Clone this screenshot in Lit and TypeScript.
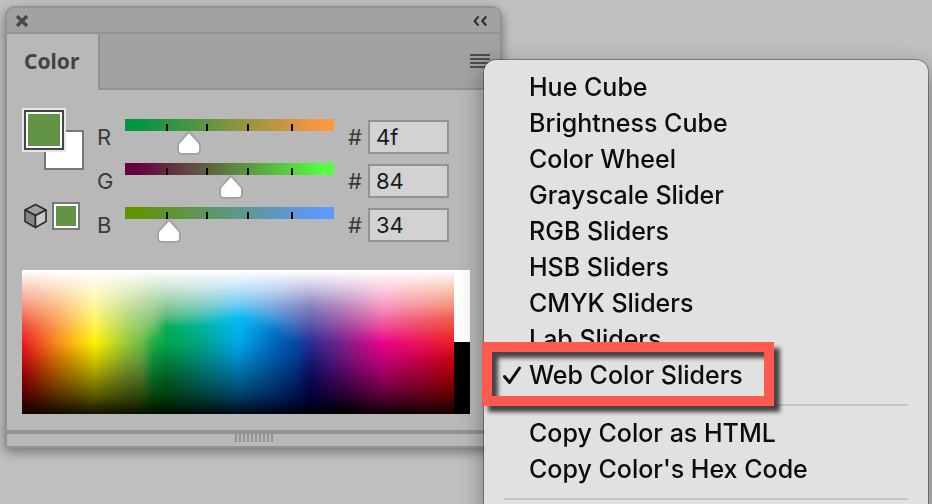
import { LitElement, html, css } from "lit";
import { customElement, property, query } from "lit/decorators.js";
import { styleMap } from "lit/directives/style-map.js";

interface Channel {
  name: string;
  hex: string;
  position: number;
  from: string;
  to: string;
}

const CHANNELS: Channel[] = [
  { name: "R", hex: "4f", position: 78, from: "#009444", to: "#ff9640" },
  { name: "G", hex: "84", position: 129, from: "#640040", to: "#55ff40" },
  { name: "B", hex: "34", position: 54, from: "#5f9400", to: "#5f98ff" },
];

const MODES = [
  "Hue Cube",
  "Brightness Cube",
  "Color Wheel",
  "Grayscale Slider",
  "RGB Sliders",
  "HSB Sliders",
  "CMYK Sliders",
  "Lab Sliders",
  "Web Color Sliders",
];
const COPY_ACTIONS = ["Copy Color as HTML", "Copy Color's Hex Code"];

/* Spectrum ramp: colour samples on a grid, blended bilinearly between them. */
const RAMP_X = [0, 36, 72, 108, 120, 131, 144, 180, 216, 252, 272, 288, 324, 360, 396, 432];
const RAMP_ROWS: [number, string][] = [
  [0, "ffffff ffffff ffffff ffffff ffffff ffffff ffffff ffffff ffffff ffffff ffffff ffffff ffffff ffffff ffffff ffffff"],
  [18, "fac8b9 fde0c4 fffbcf e4f0cc dbebcc d3e7cd cbe5d3 cbe6e4 bfe4fa c3d6f0 c4cbe8 c5c3e2 dfc8e2 fccfe0 fbcdc8 fac8b4"],
  [36, "f4907c fdbf85 fff899 c4df98 b4d799 a6d29b 8bc99d 7fcdc0 66c9f6 7da9dc 8293ca 8781bd bb87bd f797c2 f5949b f58f75"],
  [48, "f1664f fbab62 fff665 b0d67a 9dce7e 88c684 50b877 36c0b0 00bdf3 3f98d8 5a7cc2 6763b0 ab62aa f268ac f36278 f25c4c"],
  [56, "ef4840 fa9f48 fff548 a8d268 90c86c 6cbe68 08ae52 00b39e 00b6f2 147fcc 3f69ba 5552a8 9f4ba0 f04a9c ef4a68 f04a38"],
  [64, "ee3030 f89730 fff420 9bca50 7fc158 48b454 00aa4e 00ad94 00afee 0070c2 225ab0 403f9e 942f94 ee2894 ee2e60 ee3028"],
  [72, "ed1c24 f78f1e fff200 8dc63f 6cba48 20aa4a 00a64a 00a68a 00a8ec 0067ba 004ba4 2a2f92 85208a ec008c ed145b ed1c24"],
  [90, "bd0a12 c57000 cdc400 74a030 5c9838 0a8a38 008038 00857a 0089c4 0054a0 003c90 161874 6c1276 c10074 c40048 c4000c"],
  [108, "880002 8f5200 949000 566f1e 476e26 066424 005a22 00625a 006696 003e7c 002668 0a0854 4c0456 8f0056 920030 920004"],
  [126, "4d0000 542e00 5a5600 36440e 264408 04400c 003a0c 003e36 003e62 00245a 00144a 02003a 260030 560034 5c001a 5c0000"],
  [137, "260000 281600 2c2a00 1c2404 102402 022002 001e02 001e18 001e36 000e30 000628 00001e 0a000c 280016 2c000a 2c0000"],
  [144, "120000 120a00 141200 081000 041000 001000 000c00 000a08 00081a 000416 000210 00000a 000000 080004 100000 180000"],
];

const parseHex = (value: string) => [0, 2, 4].map((i) => parseInt(value.slice(i, i + 2), 16));

@customElement("color-spectrum")
export class ColorSpectrum extends LitElement {
  @query("canvas") canvas!: HTMLCanvasElement;

  static styles = css`
    :host {
      display: flex;
      height: 144px;
    }
    canvas {
      flex: 1;
      min-width: 0;
      height: 100%;
    }
    .neutrals {
      flex: none;
      width: 16px;
      background: linear-gradient(#fff 50%, #000 50%);
    }
  `;

  firstUpdated() {
    const context = this.canvas.getContext("2d");
    if (!context) return;
    const { width, height } = this.canvas;
    const image = context.createImageData(width, height);
    const rows = RAMP_ROWS.map(([y, colors]) => ({ y, colors: colors.split(" ").map(parseHex) }));
    for (let y = 0; y < height; y++) {
      let r = 0;
      while (r < rows.length - 2 && y >= rows[r + 1].y) r++;
      const v = (y - rows[r].y) / (rows[r + 1].y - rows[r].y);
      for (let x = 0; x < width; x++) {
        let c = 0;
        while (c < RAMP_X.length - 2 && x >= RAMP_X[c + 1]) c++;
        const u = (x - RAMP_X[c]) / (RAMP_X[c + 1] - RAMP_X[c]);
        const offset = (y * width + x) * 4;
        for (let k = 0; k < 3; k++) {
          const top = rows[r].colors[c][k] * (1 - u) + rows[r].colors[c + 1][k] * u;
          const bottom = rows[r + 1].colors[c][k] * (1 - u) + rows[r + 1].colors[c + 1][k] * u;
          image.data[offset + k] = top * (1 - v) + bottom * v;
        }
        image.data[offset + 3] = 255;
      }
    }
    context.putImageData(image, 0, 0);
  }

  render() {
    return html`<canvas width="432" height="144" role="img" aria-label="Color spectrum"></canvas>
      <div class="neutrals"></div>`;
  }
}

@customElement("channel-row")
export class ChannelRow extends LitElement {
  @property({ attribute: false }) channel!: Channel;

  static styles = css`
    :host {
      display: grid;
      grid-template-columns: 28px minmax(0, 1fr) 34px 81px;
      align-items: center;
      height: 36px;
      font: 22px/34px Inter, "Liberation Sans", sans-serif;
      color: #3a3a3a;
    }
    .slider {
      display: grid;
      height: 36px;
    }
    .ramp,
    .range {
      grid-area: 1 / 1;
    }
    .ramp {
      height: 12px;
      background-repeat: no-repeat;
    }
    .range {
      appearance: none;
      height: 36px;
      margin: 0 -12px;
      background: none;
    }
    .range::-webkit-slider-runnable-track {
      box-sizing: border-box;
      height: 36px;
      padding-top: 12px;
    }
    .range::-webkit-slider-thumb {
      appearance: none;
      width: 24px;
      height: 24px;
      background: url("data:image/svg+xml,%3Csvg xmlns='http://www.w3.org/2000/svg' viewBox='0 0 24 24'%3E%3Cpath d='M10.8 2Q12 .7 13.2 2L22 11.8Q23 13 23 14.5V19Q23 23 19 23H5Q1 23 1 19V14.5Q1 13 2 11.8Z' fill='%23fff' stroke='%23a4a4a4' stroke-width='2'/%3E%3C/svg%3E");
    }
    .hash {
      padding-left: 14px;
    }
    .value {
      box-sizing: border-box;
      width: 100%;
      height: 34px;
      padding: 0 6px;
      border: 2px solid #929292;
      border-radius: 0;
      background: #d2d2d2;
      color: #1a1a1a;
      font: inherit;
      line-height: 30px;
    }
  `;

  render() {
    const { name, hex, position, from, to } = this.channel;
    const ticks = [20, 39, 59, 80].map((p) => `linear-gradient(#000, #000) ${p}% 100% / 2px 7px no-repeat`);
    const background = [...ticks, `linear-gradient(90deg, ${from} 5%, ${to} 95%)`].join(", ");
    return html`
      <label for="range">${name}</label>
      <div class="slider">
        <div class="ramp" style=${styleMap({ background })}></div>
        <input id="range" class="range" type="range" min="0" max="255" .value=${String(position)} />
      </div>
      <label class="hash" for="value">#</label>
      <input id="value" class="value" type="text" maxlength="2" .value=${hex} />
    `;
  }
}

@customElement("color-panel")
export class ColorPanel extends LitElement {
  static styles = css`
    :host {
      display: block;
      border: 2px solid #929292;
      border-radius: 10px 10px 3px 3px;
      background: #b8b8b8;
      box-shadow: 0 4px 12px rgba(0, 0, 0, 0.4);
      overflow: hidden;
    }
    button {
      display: flex;
      padding: 0;
      border: 0;
      background: none;
    }
    .titlebar {
      display: flex;
      align-items: center;
      justify-content: space-between;
      height: 24px;
      padding: 2px 13px 0 9px;
      box-sizing: border-box;
      background: #a2a2a2;
    }
    .tabs {
      display: flex;
      height: 56px;
      border-top: 2px solid #929292;
    }
    .tab {
      align-items: center;
      width: 93px;
      padding: 0 0 2px 17px;
      border-right: 2px solid #929292;
      color: #434343;
      font: bold 21px/28px "Noto Sans", "Open Sans", sans-serif;
    }
    .rest {
      display: flex;
      flex: 1;
      align-items: center;
      justify-content: flex-end;
      padding-right: 10px;
      border-bottom: 2px solid #929292;
      background: #a2a2a2;
    }
    .body {
      padding: 18px 30px 16px 15px;
      border-bottom: 4px solid #929292;
    }
    .controls {
      display: flex;
      margin-bottom: 27px;
    }
    .swatches {
      flex: none;
      width: 75px;
    }
    .pair {
      display: grid;
      width: 62px;
      height: 62px;
      margin-bottom: 32px;
    }
    .foreground,
    .background {
      grid-area: 1 / 1;
      box-sizing: border-box;
    }
    .background {
      place-self: end;
      width: 40px;
      height: 40px;
      border: 2px solid #777;
      background: #fff;
    }
    .foreground {
      width: 44px;
      height: 44px;
      padding: 4px;
      border: 2px solid #e6e6e6;
      background: #619444 content-box;
      box-shadow: inset 0 0 0 2px #454545, inset 0 0 0 4px #fff;
    }
    .websafe {
      display: flex;
      align-items: center;
      gap: 5px;
      padding-left: 2px;
    }
    .nearest {
      box-sizing: border-box;
      width: 28px;
      height: 28px;
      padding: 2px;
      border: 2px solid #777;
      background: #619444 content-box;
      box-shadow: inset 0 0 0 2px #fff;
    }
    .channels {
      display: grid;
      flex: 1;
      gap: 8px;
      padding: 11px 21px 0 0;
    }
    .footer {
      display: flex;
      justify-content: center;
      height: 12px;
    }
    .grip {
      width: 38px;
      height: 8px;
      background: repeating-linear-gradient(90deg, #929292 0 2px, transparent 2px 4px);
    }
  `;

  render() {
    return html`
      <div class="titlebar">
        <button aria-label="Close">
          <svg width="12" height="12" viewBox="0 0 12 12" stroke="#4a4a4a" stroke-width="3.4">
            <path d="M1 1l10 10M11 1L1 11" />
          </svg>
        </button>
        <button aria-label="Collapse">
          <svg width="14" height="10" viewBox="0 0 14 10" fill="none" stroke="#333" stroke-width="2.2">
            <path d="M5.5.4L1.6 5l3.9 4.6M13.2.4L9.3 5l3.9 4.6" />
          </svg>
        </button>
      </div>
      <div class="tabs">
        <button class="tab">Color</button>
        <div class="rest">
          <button aria-label="Panel menu">
            <svg width="20" height="14" viewBox="0 0 20 14" fill="#4d4d4d">
              <path d="M0 0h20v2H0zM0 4h20v2H0zM0 8h20v2H0zM0 12h20v2H0z" />
            </svg>
          </button>
        </div>
      </div>
      <div class="body">
        <div class="controls">
          <div class="swatches">
            <div class="pair">
              <button class="background" aria-label="Background color"></button>
              <button class="foreground" aria-label="Foreground color"></button>
            </div>
            <div class="websafe">
              <svg width="23" height="26" viewBox="0 0 23 26" stroke="#2c2c2c" stroke-width="1.6" stroke-linejoin="round">
                <path d="M11.5 1.5L22 7 11.5 12.5 1 7z" fill="#a0a0a0" />
                <path d="M1 7l10.500 5.500v12L1 18.500z" fill="#858585" />
                <path d="M22 7l-10.500 5.500v12L22 18.500z" fill="#c9c9c9" />
              </svg>
              <button class="nearest" aria-label="Nearest web color"></button>
            </div>
          </div>
          <div class="channels">
            ${CHANNELS.map((channel) => html`<channel-row .channel=${channel}></channel-row>`)}
          </div>
        </div>
        <color-spectrum></color-spectrum>
      </div>
      <div class="footer"><div class="grip"></div></div>
    `;
  }
}

@customElement("panel-menu")
export class PanelMenu extends LitElement {
  @property() selected = "Web Color Sliders";

  static styles = css`
    :host {
      display: block;
      padding: 9px 0;
      border-radius: 12px;
      background: #e1e1e1;
      box-shadow: 0 0 0 1px rgba(0, 0, 0, 0.3), 0 8px 24px rgba(0, 0, 0, 0.4);
    }
    .item {
      position: relative;
      display: flex;
      align-items: center;
      width: 100%;
      height: 36px;
      padding: 0 0 0 45px;
      border: 0;
      background: none;
      color: #0c0c0c;
      font: 500 25px/36px Inter, "Liberation Sans", sans-serif;
      text-align: left;
      white-space: nowrap;
    }
    .text {
      position: relative;
    }
    .check {
      position: absolute;
      left: 18px;
      top: 8px;
    }
    .callout {
      position: absolute;
      left: -2px;
      top: -15px;
      box-sizing: border-box;
      width: 292px;
      height: 64px;
      border: 10px solid #ff5a4d;
      filter: drop-shadow(6px 6px 2px rgba(0, 0, 0, 0.7));
    }
    hr {
      height: 2px;
      margin: 11px 20px 9px;
      border: 0;
      background: #c6c6c6;
    }
    .front {
      z-index: 1;
    }
  `;

  renderItem(label: string) {
    if (label !== this.selected) {
      return html`<button class="item" role="menuitem"><span class="text">${label}</span></button>`;
    }
    return html`
      <button class="item front" role="menuitemradio" aria-checked="true">
        <span class="callout"></span>
        <svg class="check" width="20" height="20" viewBox="0 0 20 20" fill="none" stroke="#0c0c0c" stroke-width="3" stroke-linecap="round" stroke-linejoin="round">
          <path d="M2.500 11.500L7.500 17.500 17.500 3" />
        </svg>
        <span class="text">${label}</span>
      </button>
    `;
  }

  render() {
    return html`
      <div role="menu">
        ${MODES.map((label) => this.renderItem(label))}
        <hr />
        ${COPY_ACTIONS.map((label) => this.renderItem(label))}
        <hr />
      </div>
    `;
  }
}

@customElement("app-root")
export class AppRoot extends LitElement {
  static styles = css`
    :host {
      display: grid;
      grid-template-columns: 479fr 444fr;
      align-items: start;
      box-sizing: border-box;
      height: 100vh;
      padding: 6px 4px 0 5px;
      background: #c0c0c0;
      overflow: hidden;
    }
    color-panel {
      margin-right: -18px;
    }
    panel-menu {
      position: relative;
      margin-top: 54px;
    }
  `;

  render() {
    return html`<color-panel></color-panel><panel-menu></panel-menu>`;
  }
}
